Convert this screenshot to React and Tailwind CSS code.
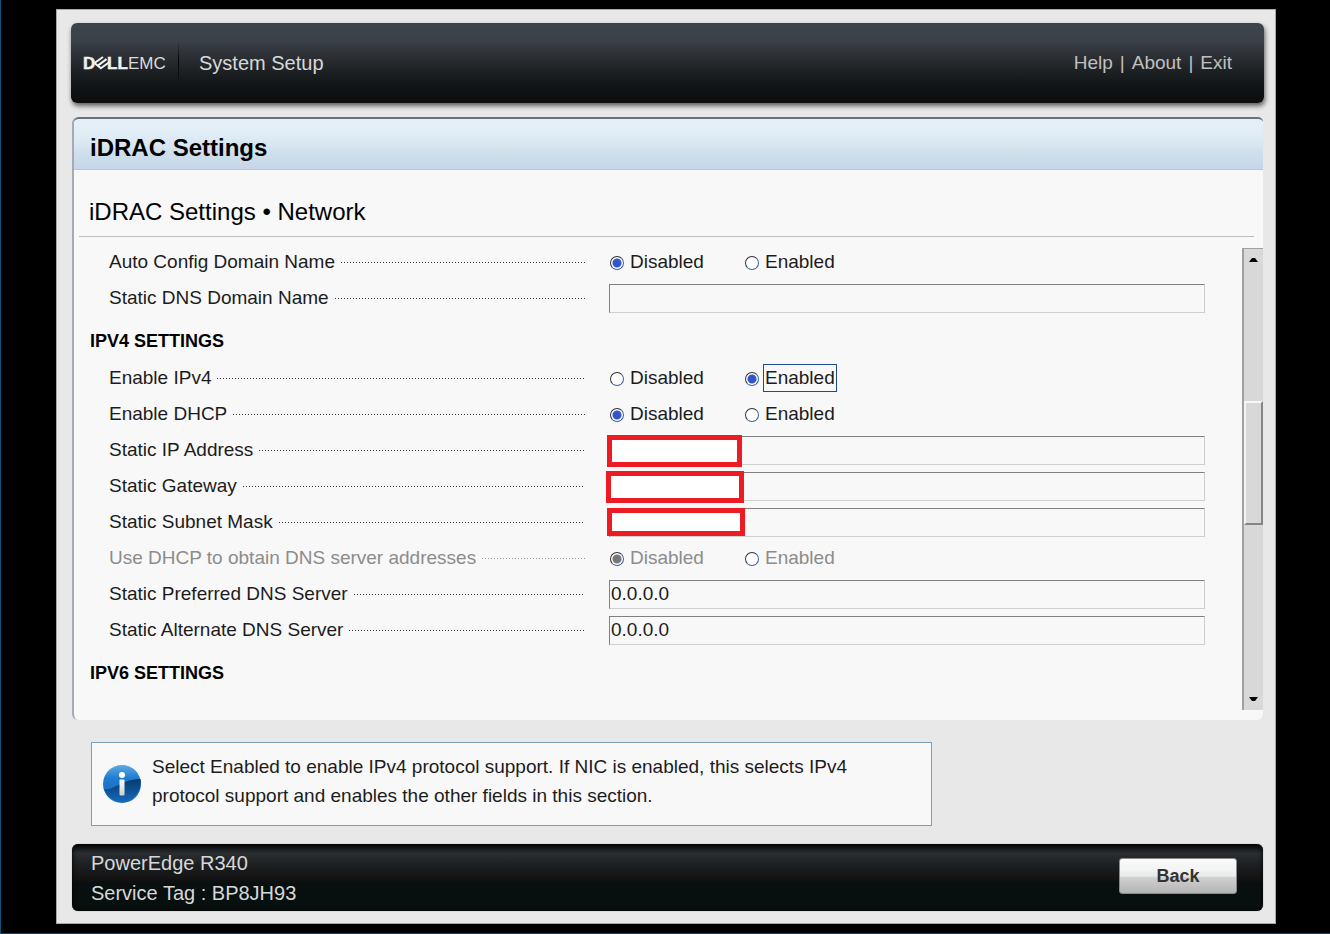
import React from "react";

const LEADER =
  "ml-[6px] h-px min-w-0 flex-1 bg-[repeating-linear-gradient(to_right,#333_0_1px,transparent_1px_3px)]";

function Row({ id, label, disabled, group, children }) {
  const Label = group ? "span" : "label";
  return (
    <div className={`flex h-[36px] items-center ${disabled ? "text-[#8c8c8c]" : "text-[#1c1c1c]"}`}>
      <div className="flex w-[476px] shrink-0 items-center">
        <Label id={`${id}-label`} htmlFor={group ? undefined : id} className="whitespace-nowrap">
          {label}
        </Label>
        <span aria-hidden="true" className={`${LEADER} ${disabled ? "opacity-50" : ""}`} />
      </div>
      <div className="ml-[24px] flex min-w-0 flex-1">{children}</div>
    </div>
  );
}

function Choice({ name, text, checked, disabled, focused }) {
  return (
    <label className="flex w-[135px] items-center">
      <input
        type="radio"
        name={name}
        defaultChecked={checked}
        disabled={disabled}
        className="mt-[2px] ml-px size-[14px] shrink-0 appearance-none rounded-full border border-t-[#333] border-r-[#3a62a0] border-b-[#3a62a0] border-l-[#333] bg-white checked:bg-[radial-gradient(circle,#3355cc_0_4px,#fff_5px)] checked:disabled:bg-[radial-gradient(circle,#777_0_4px,#fff_5px)]"
      />
      <span
        className={`ml-[4px] border px-px leading-[26px] ${focused ? "border-[#1c4a94]" : "border-transparent"}`}
      >
        {text}
      </span>
    </label>
  );
}

function RadioRow({ id, label, value, disabled, focused }) {
  return (
    <Row id={id} label={label} disabled={disabled} group>
      <div role="radiogroup" aria-labelledby={`${id}-label`} className="flex">
        {["Disabled", "Enabled"].map((o) => (
          <Choice
            key={o}
            name={id}
            text={o}
            checked={o === value}
            disabled={disabled}
            focused={focused === o}
          />
        ))}
      </div>
    </Row>
  );
}

function TextRow({ id, label, value = "", mask }) {
  return (
    <Row id={id} label={label}>
      <div className="relative flex min-w-0 flex-1">
        <input
          id={id}
          type="text"
          defaultValue={value}
          className="h-[29px] w-full min-w-0 border border-t-[#808080] border-r-[#cfcfcf] border-b-[#cfcfcf] border-l-[#808080] bg-[#f8f8f8] px-px text-[#1c1c1c] outline-none"
        />
        {mask && (
          <span aria-hidden="true" className={`absolute border-[5px] border-[#ed1c24] bg-white ${mask}`} />
        )}
      </div>
    </Row>
  );
}

function Section({ children }) {
  return (
    <h3 className="flex h-[44px] items-center pt-[6px] text-[18px] font-bold text-black">{children}</h3>
  );
}

function Logo() {
  return (
    <svg width="84" height="18" viewBox="0 0 84 18" role="img" aria-label="Dell EMC" fill="#f0f0f0">
      <g fontFamily="'Liberation Sans', Arial, sans-serif" fontSize="17">
        <text x="0" y="15" fontWeight="700" stroke="#f0f0f0" strokeWidth="0.5">D</text>
        <text x="24" y="15" fontWeight="700" stroke="#f0f0f0" strokeWidth="0.5">LL</text>
        <text x="45" y="15" fill="#dcdcdc">EMC</text>
      </g>
      <path
        d="M11.5 9 L20 3 M14.5 11.8 L23.5 5.2 M17.5 14.5 L26.5 8 M11.5 9 L18.5 14.8"
        fill="none"
        stroke="#f0f0f0"
        strokeWidth="2.1"
      />
    </svg>
  );
}

function InfoIcon() {
  return (
    <svg width="40" height="40" viewBox="0 0 40 40" aria-hidden="true" className="shrink-0">
      <defs>
        <linearGradient id="ball" x1="0" y1="0" x2="0" y2="1">
          <stop offset="0" stopColor="#5fa8e4" />
          <stop offset="0.35" stopColor="#1f7cd0" />
          <stop offset="1" stopColor="#1668b8" />
        </linearGradient>
        <linearGradient id="shade" x1="0" y1="0" x2="0" y2="1">
          <stop offset="0" stopColor="#063a70" />
          <stop offset="1" stopColor="#1468b6" />
        </linearGradient>
        <linearGradient id="stem" x1="0" y1="0" x2="0" y2="1">
          <stop offset="0" stopColor="#ffffff" />
          <stop offset="1" stopColor="#cfcfcf" />
        </linearGradient>
      </defs>
      <circle cx="20" cy="20" r="19" fill="url(#ball)" />
      <path d="M2 25 C12 27 20 15 38.5 15 A19 19 0 0 1 2 25Z" fill="url(#shade)" />
      <circle cx="20" cy="11" r="3" fill="#fff" />
      <rect x="17.5" y="15.5" width="5" height="16" rx="1" fill="url(#stem)" />
    </svg>
  );
}

export default function App() {
  return (
    <div className="flex min-h-screen flex-col border-b border-l border-b-[#1d4257] border-l-[#0d5478] bg-black pt-[9px] pr-[54px] pb-[9px] pl-[55px] font-['Liberation_Sans',Arial,sans-serif] text-[19px] leading-[24px]">
      <div className="flex flex-1 flex-col border border-[#a8a8a8] bg-[#e8e8e8] pt-[13px] pr-[11px] pb-[12px] pl-[14px]">
        <header className="flex h-[80px] items-center rounded-[6px] bg-[linear-gradient(#3d454c_0%,#3a4148_22%,#2f3238_38%,#1d2124_60%,#101416_80%,#0d0d0e_100%)] px-[12px] shadow-[1px_3px_5px_rgba(0,0,0,0.6)]">
          <Logo />
          <span
            aria-hidden="true"
            className="ml-[11px] h-[44px] w-px bg-[linear-gradient(transparent,#000,transparent)]"
          />
          <h1 className="ml-[20px] text-[20px] text-[#d8d8d8]">System Setup</h1>
          <nav className="mr-[20px] ml-auto flex gap-[7px] text-[#c0c0c0]">
            <a href="#help">Help</a>
            <span>|</span>
            <a href="#about">About</a>
            <span>|</span>
            <a href="#exit">Exit</a>
          </nav>
        </header>

        <main className="mx-px mt-[14px] flex flex-1 flex-col rounded-[6px] border-l-2 border-[#a4abb3] bg-[#f8f8f8]">
          <h2 className="flex h-[53px] items-center rounded-t-[5px] border-t-2 border-b border-t-[#65737e] border-b-[#b9c6de] bg-[linear-gradient(#e6eff6_0%,#e0edf7_30%,#d9e7f0_50%,#cddfeb_70%,#c6d6e8_100%)] pt-[8px] pl-[16px] text-[24px] font-bold text-black">
            iDRAC Settings
          </h2>
          <h2 className="mr-[9px] ml-[5px] flex h-[67px] items-center border-b border-[#bdbdbd] pt-[18px] pl-[10px] text-[24px] text-black">
            iDRAC Settings • Network
          </h2>
          <div className="flex flex-1 pt-[7px]">
            <div className="min-w-0 flex-1 pr-[37px] pl-[16px]">
              <div className="pl-[19px]">
                <RadioRow id="auto-domain" label="Auto Config Domain Name" value="Disabled" />
                <TextRow id="dns-domain" label="Static DNS Domain Name" />
              </div>
              <Section>IPV4 SETTINGS</Section>
              <div className="pl-[19px]">
                <RadioRow id="ipv4" label="Enable IPv4" value="Enabled" focused="Enabled" />
                <RadioRow id="dhcp" label="Enable DHCP" value="Disabled" />
                <TextRow
                  id="ip"
                  label="Static IP Address"
                  mask="top-[-1px] left-[-2px] h-[32px] w-[135px]"
                />
                <TextRow
                  id="gateway"
                  label="Static Gateway"
                  mask="top-[-1px] left-[-3px] h-[32px] w-[138px]"
                />
                <TextRow
                  id="subnet"
                  label="Static Subnet Mask"
                  mask="top-0 left-[-2px] h-[28px] w-[138px]"
                />
                <RadioRow
                  id="dhcp-dns"
                  label="Use DHCP to obtain DNS server addresses"
                  value="Disabled"
                  disabled
                />
                <TextRow id="dns1" label="Static Preferred DNS Server" value="0.0.0.0" />
                <TextRow id="dns2" label="Static Alternate DNS Server" value="0.0.0.0" />
              </div>
              <Section>IPV6 SETTINGS</Section>
            </div>
            <div className="mt-[4px] mb-[10px] flex w-[21px] flex-col border-t border-l-2 border-[#a0a0a0] bg-[#d8d8d8]">
              <button type="button" aria-label="Scroll up" className="flex h-[21px] items-center justify-center">
                <svg width="9" height="5" viewBox="0 0 9 5" aria-hidden="true">
                  <path d="M0 5 L3 1 H6 L9 5Z" />
                </svg>
              </button>
              <div className="flex flex-1 flex-col">
                <div className="flex-[132]" />
                <div className="flex-[121] border-2 border-t-[#f8f8f8] border-r-[#858585] border-b-[#858585] border-l-[#f4f4f4] bg-[#d8d8d8]" />
                <div className="flex-[166]" />
              </div>
              <button type="button" aria-label="Scroll down" className="flex h-[21px] items-center justify-center">
                <svg width="9" height="5" viewBox="0 0 9 5" aria-hidden="true">
                  <path d="M0 0 L3 4 H6 L9 0Z" />
                </svg>
              </button>
            </div>
          </div>
        </main>

        <aside className="mx-[20px] mt-[22px] flex h-[84px] max-w-[841px] items-center border border-[#7f9db9] bg-[#f8f8f8] pl-[10px] text-[#1c1c1c]">
          <InfoIcon />
          <p className="ml-[10px] max-w-[710px] pb-[6px] leading-[29px]">
            Select Enabled to enable IPv4 protocol support. If NIC is enabled, this selects IPv4 protocol
            support and enables the other fields in this section.
          </p>
        </aside>

        <footer className="mx-px mt-[18px] flex h-[67px] items-center justify-between rounded-[6px] bg-[linear-gradient(#050708_0%,#2a2e31_14%,#1c1f22_32%,#141213_52%,#08100f_58%,#08100f_100%)] pr-[26px] pl-[19px] shadow-[inset_0_0_5px_#000,0_0_1px_#666]">
          <div className="text-[20px] leading-[30px] text-[#d8d8d8]">
            <p>PowerEdge R340</p>
            <p>Service Tag : BP8JH93</p>
          </div>
          <button
            type="button"
            className="mb-[4px] h-[36px] w-[118px] rounded-[3px] border border-[#8a8a8a] bg-[linear-gradient(#fafafa_0%,#f4f4f4_30%,#e6ebea_50%,#d0d0d0_55%,#b4b4b4_100%)] text-[18px] font-bold text-[#333]"
          >
            Back
          </button>
        </footer>
      </div>
    </div>
  );
}
